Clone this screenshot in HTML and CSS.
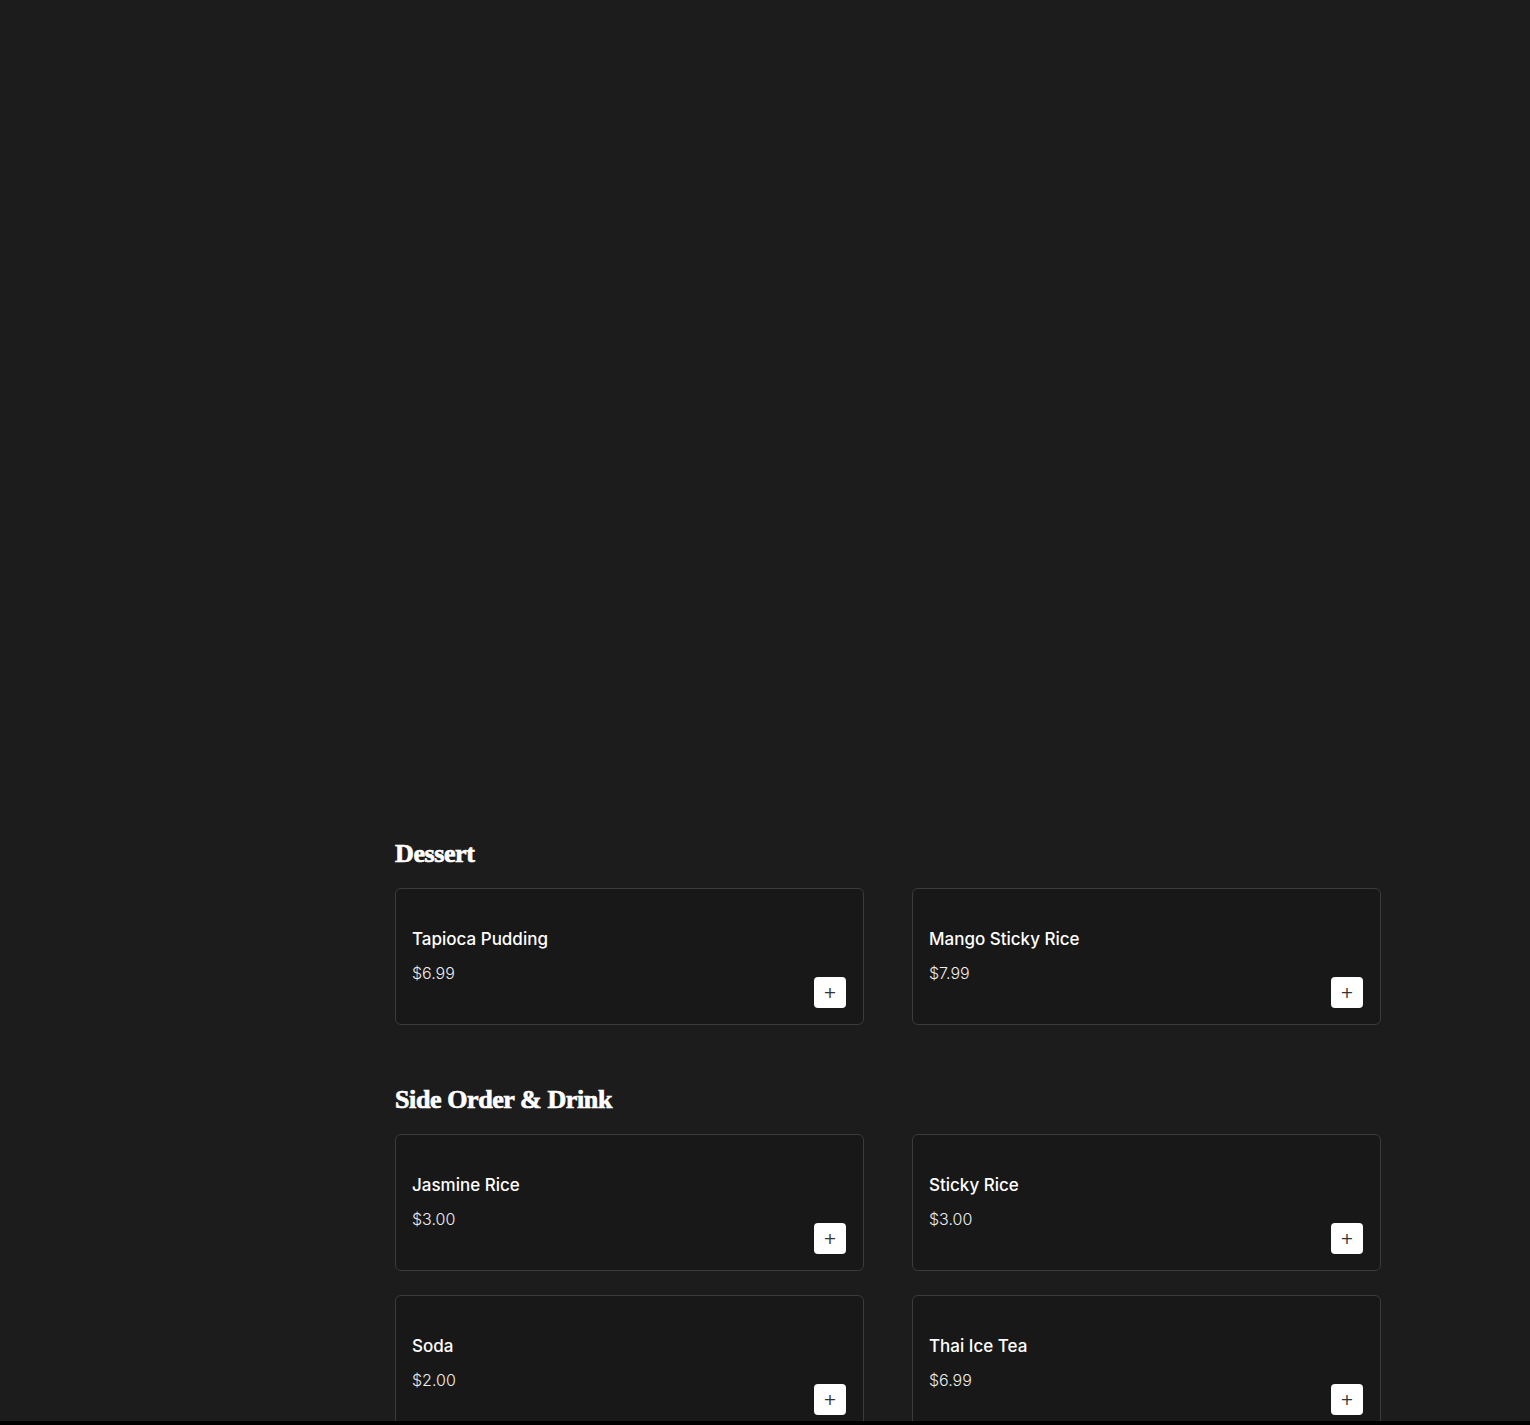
FILE: index.html
```html
<!DOCTYPE html>
<html lang="en">
<head>
<meta charset="utf-8">
<title>Menu</title>
<link rel="stylesheet" href="styles.css">
</head>
<body>
<div class="page">
  <aside class="side"></aside>
  <main class="menu">
    <div class="hero"></div>
    <section class="section">
      <h2 class="section-title">Dessert</h2>
      <div class="grid">
        <div class="card">
          <div class="info"><div class="name">Tapioca Pudding</div><div class="price">$6.99</div></div>
          <button class="add">+</button>
        </div>
        <div class="card">
          <div class="info"><div class="name">Mango Sticky Rice</div><div class="price">$7.99</div></div>
          <button class="add">+</button>
        </div>
      </div>
    </section>
    <section class="section">
      <h2 class="section-title">Side Order &amp; Drink</h2>
      <div class="grid">
        <div class="card">
          <div class="info"><div class="name">Jasmine Rice</div><div class="price">$3.00</div></div>
          <button class="add">+</button>
        </div>
        <div class="card">
          <div class="info"><div class="name">Sticky Rice</div><div class="price">$3.00</div></div>
          <button class="add">+</button>
        </div>
        <div class="card">
          <div class="info"><div class="name">Soda</div><div class="price">$2.00</div></div>
          <button class="add">+</button>
        </div>
        <div class="card">
          <div class="info"><div class="name">Thai Ice Tea</div><div class="price">$6.99</div></div>
          <button class="add">+</button>
        </div>
      </div>
    </section>
  </main>
</div>
<div class="bottom-bar"></div>
</body>
</html>
```
FILE: styles.css
```css
html, body {
  margin: 0;
  padding: 0;
  background: #1c1c1c;
  color: #ffffff;
  font-family: "Inter", "Noto Sans", sans-serif;
}
.page {
  display: grid;
  grid-template-columns: 347px 986px;
  column-gap: 48px;
}
.hero {
  height: 838px;
}
.section {
  margin-bottom: 59px;
}
.section-title {
  margin: 0 0 18px;
  font-family: "Liberation Serif", "Times New Roman", serif;
  font-weight: 700;
  font-size: 26px;
  line-height: 32px;
  letter-spacing: -0.4px;
  -webkit-text-stroke: 0.7px #ffffff;
  color: #ffffff;
}
.grid {
  display: grid;
  grid-template-columns: 1fr 1fr;
  column-gap: 48px;
  row-gap: 24px;
}
.card {
  box-sizing: border-box;
  height: 137px;
  border: 1px solid #3b3b3b;
  border-radius: 6px;
  background: #181818;
  padding: 38px 17px 16px 16px;
  display: flex;
  justify-content: space-between;
  align-items: flex-end;
}
.info {
  align-self: flex-start;
}
.name {
  font-size: 17px;
  font-weight: 500;
  line-height: 24px;
  margin-bottom: 10px;
}
.price {
  font-size: 16px;
  font-weight: 300;
  line-height: 24px;
  color: #eeeeee;
}
.add {
  width: 32px;
  height: 31px;
  border: none;
  border-radius: 4px;
  background: #ffffff;
  color: #333333;
  font-family: "DejaVu Sans", sans-serif;
  font-size: 16px;
  line-height: 31px;
  padding: 0;
  text-align: center;
}
.bottom-bar {
  position: fixed;
  left: 0;
  right: 0;
  bottom: 0;
  height: 4px;
  background: #000000;
}
```
